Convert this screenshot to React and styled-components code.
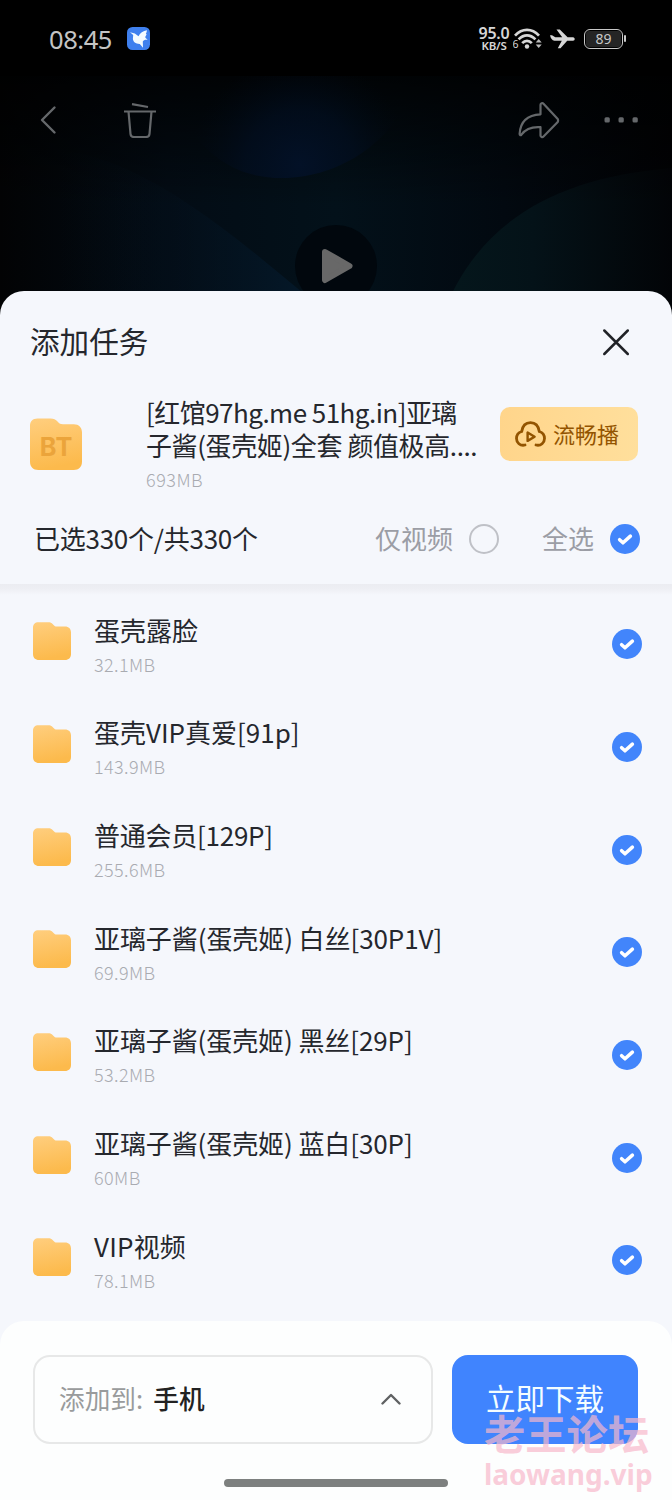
import React from "react";
import styled, { createGlobalStyle } from "styled-components";

const GlobalStyle = createGlobalStyle`
  * { box-sizing: border-box; }
  body {
    margin: 0;
    background: #000;
    font-family: "Noto Sans CJK SC", "Noto Sans", sans-serif;
  }
  button { border: 0; padding: 0; background: none; font: inherit; color: inherit; }
`;

const Screen = styled.div`
  position: relative;
  width: 672px;
  height: 1500px;
  overflow: hidden;
  display: flex;
  flex-direction: column;
`;

const Hero = styled.div`
  position: relative;
  height: 321px;
  flex: none;
  background: #000;
`;

const Backdrop = styled.svg`
  position: absolute;
  inset: 0;
`;

const StatusBar = styled.div`
  position: relative;
  height: 76px;
  padding: 1px 46px 0 49px;
  display: flex;
  align-items: center;
  color: #d6d6d6;
`;

const Clock = styled.span`
  font: 400 25.5px/30px "Noto Sans", sans-serif;
  letter-spacing: -0.45px;
  width: 78px;
  color: #c4c4c4;
`;

const StatusIcons = styled.div`
  margin-left: auto;
  display: flex;
  align-items: center;
`;

const Speed = styled.div`
  width: 36px;
  margin-right: 1px;
  display: flex;
  flex-direction: column;
  align-items: center;
  font-family: "Noto Sans", sans-serif;
  font-weight: 600;
  font-size: 16px;
  letter-spacing: -0.2px;
  span { display: block; height: 13px; line-height: 13px; }
  small { font-size: 11.5px; height: 11px; line-height: 11px; }
`;

const Battery = styled.div`
  position: relative;
  width: 39px;
  height: 20px;
  border: 1.5px solid #c8c8c8;
  border-radius: 6px;
  padding: 1px;
  display: flex;
  margin: 0 3px 0 9px;
  span {
    flex: 1;
    border-radius: 3px;
    background: #252525;
    font: 400 14px/15px "Noto Sans", sans-serif;
    text-align: center;
    color: #c8c8c8;
  }
  &::after {
    content: "";
    position: absolute;
    right: -4px;
    top: 5px;
    width: 2px;
    height: 7px;
    border-radius: 1px;
    background: #c8c8c8;
  }
`;

const Toolbar = styled.div`
  position: relative;
  height: 88px;
  padding: 0 32px 0 39px;
  display: flex;
  align-items: center;
  svg { display: block; }
`;

const ToolGap = styled.span`
  width: ${(p) => p.$w}px;
  flex: ${(p) => (p.$grow ? 1 : "none")};
`;

const PlayCircle = styled.div`
  position: absolute;
  left: 295px;
  top: 225px;
  width: 82px;
  height: 82px;
  border-radius: 50%;
  background: #01070d;
  display: flex;
  align-items: center;
  justify-content: center;
`;

const Sheet = styled.main`
  position: relative;
  margin-top: -30.5px;
  flex: 1;
  min-height: 0;
  display: flex;
  flex-direction: column;
  background: #f5f7fc;
  border-radius: 24px 24px 0 0;
  overflow: hidden;
  color: #25272d;
`;

const SheetHeader = styled.header`
  height: 103.5px;
  flex: none;
  padding: 0 41px 0 30px;
  display: flex;
  align-items: center;
  justify-content: space-between;
`;

const Heading = styled.h1`
  margin: -3px 0 0;
  font-size: 29.6px;
  line-height: 40px;
  font-weight: 400;
`;

const TaskRow = styled.section`
  height: 104px;
  flex: none;
  padding: 1px 34px 0 30px;
  display: flex;
`;

const TaskFolder = styled.div`
  margin: 23px 64px 0 0;
  height: 52px;
`;

const TaskText = styled.div`
  width: 354px;
`;

const TaskLine = styled.div`
  font-size: 26px;
  line-height: 33px;
  letter-spacing: ${(p) => p.$track || 0}px;
  white-space: pre;
`;

const TaskSize = styled.div`
  font-size: 18px;
  line-height: 37px;
  letter-spacing: 0.5px;
  color: #a9abb1;
  font-weight: 300;
`;

const PlayButton = styled.button`
  width: 138px;
  height: 54px;
  margin-top: 12px;
  border-radius: 10px;
  background: linear-gradient(90deg, #ffd58b, #ffdf9c);
  display: flex;
  align-items: center;
  padding-left: 15px;
  gap: 7px;
  color: #935400;
  font-size: 22px;
`;

const ButtonLabel = styled.span`
  padding-bottom: 3px;
`;

const SelectionBar = styled.section`
  height: 86px;
  flex: none;
  padding: 0 32px 5px 34px;
  display: flex;
  align-items: center;
  font-size: 26px;
`;

const Count = styled.span`
  flex: 1;
  padding-bottom: 3px;
  letter-spacing: -0.25px;
`;

const Option = styled.label`
  display: flex;
  align-items: center;
  gap: 16px;
  margin-left: ${(p) => p.$gap || 0}px;
  color: #9b9da5;
`;

const OptionLabel = styled.span`
  padding-bottom: 3px;
`;

const Radio = styled.span`
  width: 30px;
  height: 30px;
  border: 2px solid #bfc1c7;
  border-radius: 50%;
`;

const CheckDisc = styled.span`
  width: 30px;
  height: 30px;
  border-radius: 50%;
  background: #4285fb;
  display: flex;
  align-items: center;
  justify-content: center;
`;

const List = styled.ul`
  flex: 1;
  min-height: 0;
  margin: 0;
  padding: 9px 0 0;
  list-style: none;
  background: linear-gradient(#ebecf1 0, #eeeff4 5px, #f5f7fc 11px);
`;

const Item = styled.li`
  height: 102.65px;
  padding: 0 30px 0 33px;
  display: flex;
  align-items: center;
`;

const ItemFolder = styled.div`
  width: 61px;
  height: 38px;
  margin-top: -6px;
`;

const ItemText = styled.div`
  flex: 1;
  margin-top: 4px;
`;

const ItemTitle = styled.div`
  font-size: 26px;
  line-height: 36px;
  letter-spacing: ${(p) => p.$track || 0}px;
  white-space: pre;
`;

const ItemSize = styled.div`
  font-size: 18px;
  line-height: 33px;
  font-weight: 300;
  color: #a9abb1;
  letter-spacing: 0.4px;
`;

const Footer = styled.footer`
  position: relative;
  height: 179px;
  flex: none;
  padding: 34px 34px 0 33px;
  display: flex;
  gap: 19px;
  background: #fdfefe;
  border-radius: 24px 24px 0 0;
`;

const Destination = styled.button`
  width: 400px;
  height: 89px;
  padding: 0 30px 0 24px;
  border: 2px solid #e7e8e8;
  border-radius: 17px;
  display: flex;
  align-items: center;
  font-size: 25.7px;
  color: #999b9c;
`;

const DestinationLabel = styled.span`
  flex: 1;
  text-align: left;
  padding-bottom: 4px;
  strong { font-weight: 500; color: #222; margin-left: 10px; }
`;

const Download = styled.button`
  flex: 1;
  height: 89px;
  padding-bottom: 5px;
  border-radius: 16px;
  background: #4084fe;
  color: #f4fdff;
  font-size: 29.5px;
`;

const HomeBar = styled.div`
  position: absolute;
  left: 224px;
  bottom: 13px;
  width: 224px;
  height: 8px;
  border-radius: 4px;
  background: #7d807f;
`;

const Watermark = styled.div`
  position: absolute;
  left: 484px;
  top: 1409px;
  color: rgba(248, 184, 202, 0.7);
  white-space: nowrap;
`;

const WatermarkName = styled.div`
  font-weight: 700;
  font-size: 41.3px;
  height: 47px;
  line-height: 46px;
`;

const WatermarkSite = styled.div`
  font: 700 28px/36px "Noto Sans", sans-serif;
`;

function Folder({ size, label }) {
  return (
    <svg width={size} height={size} viewBox="0 0 38 38" display="block">
      <defs>
        <linearGradient id="folder" x1="0" y1="0" x2="0.2" y2="1">
          <stop offset="0" stopColor="#ffce7e" />
          <stop offset="1" stopColor="#fcba4c" />
        </linearGradient>
      </defs>
      <path
        fill="url(#folder)"
        d="M5.500 0.300H15c2.400 0 3.700 0.600 5.300 2.400 1.200 1.300 2 1.800 3.700 1.800H32c3.700 0 6 2.300 6 6V32c0 3.700-2.300 6-6 6H6c-3.700 0-6-2.300-6-6V5.800C0 2.300 2 .3 5.500 .3Z"
      />
      {label && (
        <text x="19.300" y="27.800" textAnchor="middle" fontFamily="Inter, sans-serif" fontWeight="700" fontSize="18.500" letterSpacing="0.400" fill="#eba43b">
          {label}
        </text>
      )}
    </svg>
  );
}

function Check() {
  return (
    <CheckDisc>
      <svg width="30" height="30" viewBox="0 0 30 30">
        <path d="M9.600 15.700 13 18.800l7.400-6.700" fill="none" stroke="#fff" strokeWidth="3.500" strokeLinecap="round" strokeLinejoin="round" />
      </svg>
    </CheckDisc>
  );
}

const ITEMS = [
  { title: "蛋壳露脸", size: "32.1MB" },
  { title: "蛋壳VIP真爱[91p]", size: "143.9MB" },
  { title: "普通会员[129P]", size: "255.6MB", track: -0.25 },
  { title: "亚璃子酱(蛋壳姬) 白丝[30P1V]", size: "69.9MB", track: -0.08 },
  { title: "亚璃子酱(蛋壳姬) 黑丝[29P]", size: "53.2MB", track: -0.1 },
  { title: "亚璃子酱(蛋壳姬) 蓝白[30P]", size: "60MB", track: -0.1 },
  { title: "VIP视频", size: "78.1MB", track: 0.2 },
];

export default function App() {
  return (
    <Screen>
      <GlobalStyle />
      <Hero>
        <Backdrop width="672" height="321" viewBox="0 0 672 321">
          <defs>
            <linearGradient id="side" x1="0" x2="1" y1="0" y2="0">
              <stop offset="0" stopColor="#020304" />
              <stop offset="0.25" stopColor="#030c15" />
              <stop offset="0.5" stopColor="#03111a" />
              <stop offset="0.75" stopColor="#020910" />
              <stop offset="1" stopColor="#010204" />
            </linearGradient>
            <linearGradient id="wave" x1="0" x2="1" y1="0" y2="0">
              <stop offset="0" stopColor="#04121f" stopOpacity="0" />
              <stop offset="0.4" stopColor="#04121f" stopOpacity="0.3" />
              <stop offset="0.85" stopColor="#041727" />
            </linearGradient>
            <linearGradient id="arc" x1="0" x2="1" y1="0" y2="0">
              <stop offset="0" stopColor="#05171c" />
              <stop offset="0.4" stopColor="#041218" />
              <stop offset="1" stopColor="#020407" />
            </linearGradient>
            <radialGradient id="orb" gradientUnits="userSpaceOnUse" cx="300" cy="165" r="110">
              <stop offset="0" stopColor="#031127" />
              <stop offset="0.5" stopColor="#020e20" stopOpacity="0.7" />
              <stop offset="1" stopColor="#020812" stopOpacity="0" />
            </radialGradient>
            <linearGradient id="shade" x1="0" x2="0" y1="0" y2="1">
              <stop offset="0" stopColor="#000" stopOpacity="0.8" />
              <stop offset="1" stopColor="#000" stopOpacity="0" />
            </linearGradient>
          </defs>
          <rect y="76" width="672" height="245" fill="url(#side)" />
          <path d="M60 321V150C150 160 240 240 336 321Z" fill="url(#wave)" />
          <path d="M440 321C475 225 550 178 672 168V321Z" fill="url(#arc)" />
          <rect y="76" width="672" height="130" fill="url(#shade)" />
          <path d="M165 76C190 150 230 178 282 178 340 178 400 140 416 76Z" fill="url(#orb)" />
        </Backdrop>
        <StatusBar>
          <Clock>08:45</Clock>
          <svg width="23" height="23" viewBox="0 0 23 23">
            <rect width="23" height="23" rx="5.500" fill="#3f80ee" />
            <path d="M3 5.300 7.800 6.400 11.500 9.300C13 5.800 16 3.900 20 3.300c-.2 1.500-.6 2.600-1.200 3.700l.9.200-1.500 2.700.4 1c1 .6 1.600 1.200 2 2-2.400-.4-4 .2-4.800 1.600l.2 6.200-3.200-3.800C8.800 17 6 15 5.900 11.800L6.200 8Z" fill="#f4fbff" />
          </svg>
          <StatusIcons>
            <Speed><span>95.0</span><small>KB/S</small></Speed>
            <svg width="30" height="24" viewBox="0 0 30 24">
              <g fill="none" stroke="#d6d6d6" strokeWidth="2.700">
                <path d="M2 8.700C9 1 19 1 26 8.700" />
                <path d="M5.600 12.400C10.800 7 17.200 7 22.400 12.400" />
                <path d="M9.200 16.200C12 13.200 16 13.200 18.800 16.200" />
              </g>
              <circle cx="14" cy="19.500" r="2.200" fill="#d6d6d6" />
              <text x="-0.500" y="21.300" fontFamily="Noto Sans" fontSize="10.500" fill="#d6d6d6">6</text>
              <path d="m22.700 15.500 3-3.500 3 3.500ZM22.700 17.500l3 3.500 3-3.500Z" fill="#bbb" />
            </svg>
            <ToolGap $w={7} />
            <svg width="25" height="20" viewBox="0 0 25 20">
              <path d="M0 6.300 2 6.300 5.300 8.200H12.200L6.500 .5H9.800L17.600 8.200H23C25.300 8.500 25.300 11.500 23 11.800H17.200L10.500 19.300H7.800L11.800 11.800H4.500C2 11.500 .8 9.400 0 6.300Z" fill="#d6d6d6" />
            </svg>
            <Battery><span>89</span></Battery>
          </StatusIcons>
        </StatusBar>
        <Toolbar>
          <svg width="18" height="30" viewBox="0 0 18 30">
            <path d="M15.500 2.500 3 15l12.500 12.500" fill="none" stroke="#65686b" strokeWidth="2.400" strokeLinecap="round" strokeLinejoin="round" />
          </svg>
          <ToolGap $w={66} />
          <svg width="34" height="36" viewBox="0 0 34 36">
            <path d="M1 9.500H33M9 2.200 25 5M5.500 9.500 7.500 32C7.700 34.300 8.600 35 11 35H23C25.400 35 26.300 34.300 26.500 32L28.500 9.500" fill="none" stroke="#65686b" strokeWidth="2.200" />
          </svg>
          <ToolGap $grow />
          <svg width="42" height="38" viewBox="0 0 42 38">
            <path d="M22.500 3.700C22.500 2.300 24.400 1.500 25.500 2.700L39.500 17.700Q40.700 19.500 39.500 21.300L25.500 35.500C24.400 36.700 22.500 36 22.500 34.500V26.200C13 25.500 7.500 28 3.400 33.700 2.700 34.600 1.600 34.200 1.600 33 2.200 21 9.500 14 22.500 13.300Z" fill="none" stroke="#65686b" strokeWidth="2.200" strokeLinejoin="round" />
          </svg>
          <ToolGap $w={43} />
          <svg width="37" height="6" viewBox="0 0 37 6">
            <g fill="#65686b">
              <rect x="1.500" y="0.300" width="5.300" height="5.300" rx="1.500" />
              <rect x="15.500" y="0.300" width="5.300" height="5.300" rx="1.500" />
              <rect x="29.500" y="0.300" width="5.300" height="5.300" rx="1.500" />
            </g>
          </svg>
        </Toolbar>
        <PlayCircle>
          <svg width="33" height="36" viewBox="0 0 33 36">
            <path d="M5 4 29.500 18 5 32Z" fill="#686868" stroke="#686868" strokeWidth="6" strokeLinejoin="round" />
          </svg>
        </PlayCircle>
      </Hero>

      <Sheet>
        <SheetHeader>
          <Heading>添加任务</Heading>
          <svg width="30" height="30" viewBox="0 0 30 30">
            <path d="m3.300 3.500 23.500 23.500M26.800 3.500 3.300 27" stroke="#202227" strokeWidth="2.500" strokeLinecap="round" />
          </svg>
        </SheetHeader>
        <TaskRow>
          <TaskFolder><Folder size={52} label="BT" /></TaskFolder>
          <TaskText>
            <TaskLine $track={-0.53}>[红馆97hg.me 51hg.in]亚璃</TaskLine>
            <TaskLine $track={-0.4}>子酱(蛋壳姬)全套 颜值极高....</TaskLine>
            <TaskSize>693MB</TaskSize>
          </TaskText>
          <PlayButton>
            <svg width="31" height="26" viewBox="0 0 31 26">
              <path d="M10 24C5 25.200 1.500 21.500 1.500 17.500c0-3.500 2-6 5.200-7C7.500 5 10.500 1.600 15.500 1.600s8 3.400 8.800 8.900c3.200 1 5.200 3.500 5.200 7 0 4-3.500 7.700-8.500 6.500" fill="none" stroke="#935400" strokeWidth="2.800" strokeLinecap="round" />
              <path d="M12.600 11.500v8.400l7-4.200Z" fill="none" stroke="#935400" strokeWidth="2.400" strokeLinejoin="round" />
            </svg>
            <ButtonLabel>流畅播</ButtonLabel>
          </PlayButton>
        </TaskRow>
        <SelectionBar>
          <Count>已选330个/共330个</Count>
          <Option><OptionLabel>仅视频</OptionLabel><Radio /></Option>
          <Option $gap={43}><OptionLabel>全选</OptionLabel><Check /></Option>
        </SelectionBar>
        <List>
          {ITEMS.map((item) => (
            <Item key={item.title}>
              <ItemFolder><Folder size={38} /></ItemFolder>
              <ItemText>
                <ItemTitle $track={item.track}>{item.title}</ItemTitle>
                <ItemSize>{item.size}</ItemSize>
              </ItemText>
              <Check />
            </Item>
          ))}
        </List>
        <Footer>
          <Destination>
            <DestinationLabel>添加到:<strong>手机</strong></DestinationLabel>
            <svg width="20" height="14" viewBox="0 0 20 14">
              <path d="M1.500 10.500 10 2l8.500 8.500" fill="none" stroke="#606263" strokeWidth="2.400" strokeLinecap="round" strokeLinejoin="round" />
            </svg>
          </Destination>
          <Download>立即下载</Download>
          <HomeBar />
        </Footer>
      </Sheet>
      <Watermark>
        <WatermarkName>老王论坛</WatermarkName>
        <WatermarkSite>laowang.vip</WatermarkSite>
      </Watermark>
    </Screen>
  );
}
